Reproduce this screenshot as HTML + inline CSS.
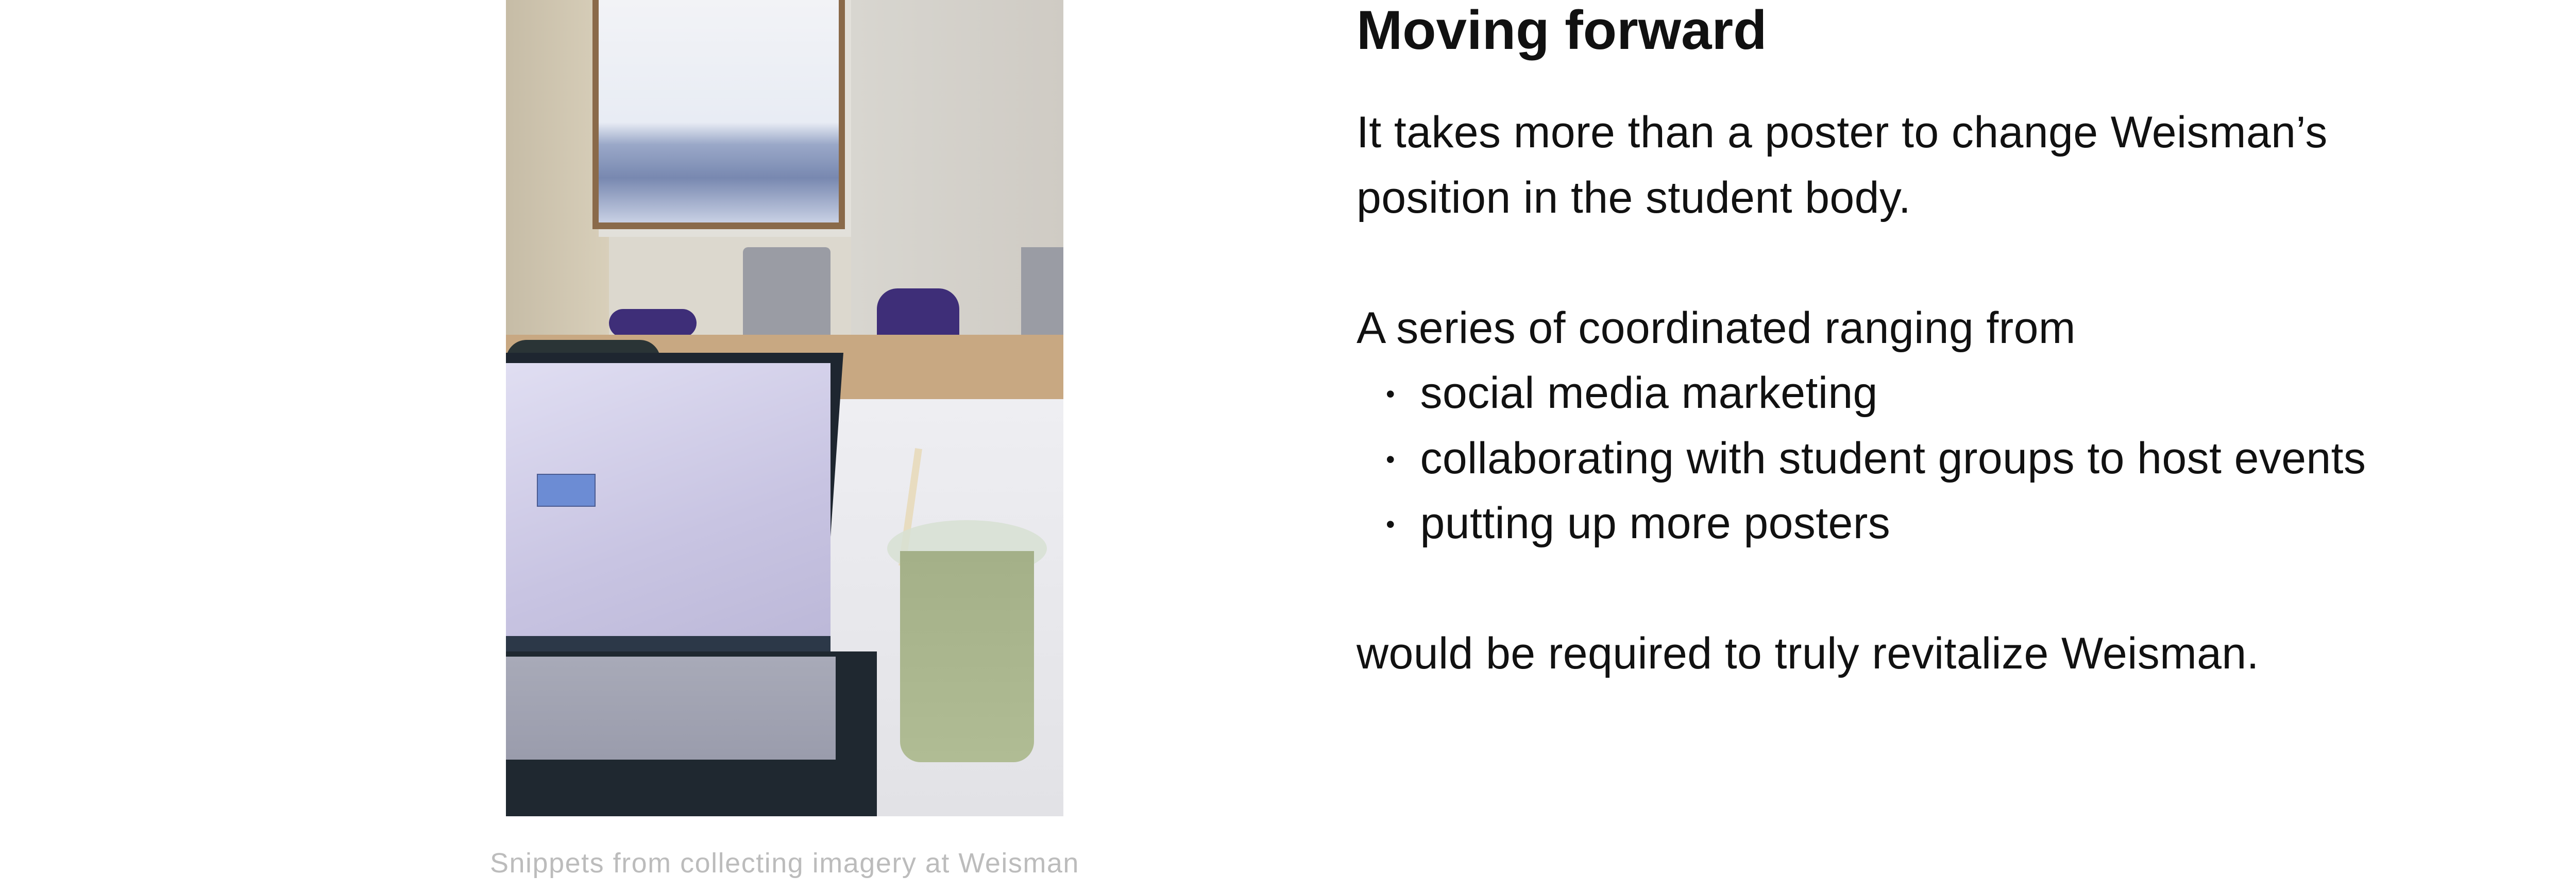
<!DOCTYPE html>
<html><head><style>
body{margin:0;width:5220px;height:1734px;background:#fff;overflow:hidden;position:relative;font-family:"Liberation Sans",sans-serif}
.ph{position:absolute;left:982px;top:0;width:1082px;height:1585px;overflow:hidden;background:#d2cfc8}
.ph div{position:absolute}
.t{position:absolute;left:2633px;color:#111;white-space:nowrap}
.b{font-size:86px;font-weight:300;line-height:1;letter-spacing:0.4px}
</style></head><body>
<div class="ph">
 <div style="left:0;top:0;width:200px;height:680px;background:linear-gradient(90deg,#c6bca6,#d8cfba)"></div>
 <div style="left:180px;top:0;width:490px;height:460px;background:#e2e0da"></div>
 <div style="left:168px;top:0;width:490px;height:445px;background:#8a6a4a"></div>
 <div style="left:180px;top:0;width:466px;height:432px;background:linear-gradient(180deg,#f2f3f6 0%,#e8ecf4 55%,#9aa8c8 65%,#7888b0 80%,#c8d0e4 100%)"></div>
 <div style="left:670px;top:0;width:412px;height:680px;background:linear-gradient(90deg,#d8d6d0,#cfcbc4)"></div>
 <div style="left:200px;top:460px;width:470px;height:220px;background:#dcd8ce"></div>
 <div style="left:460px;top:480px;width:170px;height:230px;background:#9a9ca4;border-radius:10px"></div>
 <div style="left:720px;top:560px;width:160px;height:130px;background:#3e2e78;border-radius:40px"></div>
 <div style="left:200px;top:600px;width:170px;height:55px;background:#3e2e78;border-radius:30px"></div>
 <div style="left:1000px;top:480px;width:82px;height:220px;background:#9a9ca4"></div>
 <div style="left:0;top:650px;width:1082px;height:130px;background:#c8a882"></div>
 <div style="left:600px;top:775px;width:482px;height:810px;background:linear-gradient(180deg,#eeeef2,#e2e2e6)"></div>
 <div style="left:0;top:660px;width:300px;height:40px;background:#2a3436;border-radius:60px 60px 0 0"></div>
 <div style="left:0;top:685px;width:655px;height:580px;background:#1e2630;transform:skewX(-4deg);transform-origin:top left"></div>
 <div style="left:0;top:705px;width:630px;height:540px;background:linear-gradient(160deg,#e0def2,#c8c4e2 60%,#bcb8d8)"></div>
 <div style="left:0;top:1235px;width:630px;height:35px;background:#2c3848"></div>
 <div style="left:0;top:1265px;width:720px;height:320px;background:#1f2830"></div>
 <div style="left:0;top:1275px;width:640px;height:200px;background:linear-gradient(180deg,#a8aab8,#9a9cac)"></div>
 <div style="left:60px;top:920px;width:110px;height:60px;background:#6c8cd4;border:2px solid #4a5a90"></div>
 <div style="left:778px;top:870px;width:14px;height:230px;background:#e8dcc0;transform:rotate(8deg)"></div>
 <div style="left:740px;top:1010px;width:310px;height:110px;background:rgba(215,225,210,.85);border-radius:50%"></div>
 <div style="left:765px;top:1070px;width:260px;height:410px;background:linear-gradient(180deg,#a4b088,#b0bc94);border-radius:0 0 40px 40px"></div>
</div>
<div style="position:absolute;left:951px;top:1645px;width:1140px;text-align:center;font-size:54px;color:#bcbcbc;letter-spacing:1.5px;white-space:nowrap">Snippets from collecting imagery at Weisman</div>
<div class="t" style="top:2px;font-size:107px;font-weight:bold;line-height:1.05">Moving forward</div>
<div class="t b" style="top:214px">It takes more than a poster to change Weisman’s</div>
<div class="t b" style="top:341px">position in the student body.</div>
<div class="t b" style="top:594px">A series of coordinated ranging from</div>
<div class="t b" style="top:720px;left:2690px"><span style="font-size:50px;vertical-align:10px">•</span>&nbsp; social media marketing</div>
<div class="t b" style="top:847px;left:2690px"><span style="font-size:50px;vertical-align:10px">•</span>&nbsp; collaborating with student groups to host events</div>
<div class="t b" style="top:973px;left:2690px"><span style="font-size:50px;vertical-align:10px">•</span>&nbsp; putting up more posters</div>
<div class="t b" style="top:1226px">would be required to truly revitalize Weisman.</div>
</body></html>
